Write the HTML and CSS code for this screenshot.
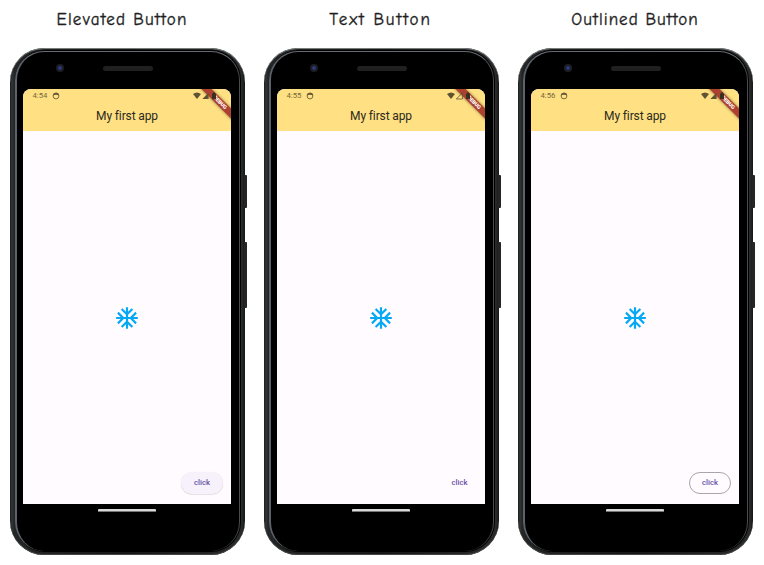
FILE: index.html
```html
<!DOCTYPE html>
<html lang="en">
<head>
<meta charset="utf-8">
<title>Flutter buttons</title>
<link rel="stylesheet" href="styles.css">
</head>
<body>
<main class="gallery" id="gallery"></main>
<template id="device">
  <section class="demo">
    <h2 class="title"></h2>
    <div class="phone">
      <i class="key power"></i><i class="key volume"></i>
      <div class="rim"><div class="glass">
        <div class="top"><i class="camera"></i><i class="speaker"></i></div>
        <div class="screen">
          <header class="appbar">
            <div class="status">
              <span class="time"></span>
              <svg class="face" width="8" height="8" viewBox="0 0 8 8"><circle cx="4" cy="4" r="2.9" fill="none" stroke="#7a6c43" stroke-width="1"/><path d="M.8 3.4Q1 1 4 .7T7.2 3.4Q4 2.2.8 3.4" fill="#665a38"/></svg>
              <svg class="signals" width="27" height="8" viewBox="0 0 27 8"><path d="M0 2Q4 -1 8 2L4 7Z" fill="#5e5333"/><path class="cell" d="M9.3 7 15.6.7V7Z"/><path d="M19 1.5H20V.5H22V1.5H23V7H19Z" fill="#3a3020"/></svg>
            </div>
            <h1>My first app</h1>
            <div class="ribbon"><span>DEBUG</span></div>
          </header>
          <div class="body">
            <svg class="snow" viewBox="0 0 24 24"><path fill="#03a9f4" d="M22 11h-4.17l3.24-3.24-1.41-1.42L15 11h-2V9l4.66-4.66-1.42-1.41L13 6.17V2h-2v4.17L7.76 2.93 6.34 4.34 11 9v2H9L4.34 6.34 2.93 7.76 6.17 11H2v2h4.17l-3.24 3.24 1.41 1.42L9 13h2v2l-4.66 4.66 1.42 1.41L11 17.83V22h2v-4.17l3.24 3.24 1.42-1.41L13 15v-2h2l4.66 4.66 1.41-1.42L17.83 13H22z"/></svg>
            <button class="btn">click</button>
          </div>
        </div>
        <div class="nav"><i></i></div>
      </div></div>
    </div>
  </section>
</template>
<script src="app.js"></script>
</body>
</html>
```
FILE: styles.css
```css
* { box-sizing: border-box; }
body { margin: 0; background: #fff; width: 764px; height: 565px; overflow: hidden; font-family: Roboto, sans-serif; }
.gallery { display: flex; gap: 19px; padding-left: 10px; }
.demo { width: 235px; }
.title { margin: 0; height: 48px; padding: 10px 11px 0 0; font: 400 17px/19px Excalifont, "Comic Neue", Lato, sans-serif; letter-spacing: 1.25px; text-align: center; color: #1e1e1e; white-space: nowrap; -webkit-text-stroke: .35px #1e1e1e; }
.text .title { letter-spacing: 1.9px; padding-right: 2px; }
.outlined .title { letter-spacing: 1.05px; padding-right: 1px; }
.phone { position: relative; height: 507px; padding: 2px 4px 3px 5px; border-radius: 34px; background: linear-gradient(90deg, #1b1d1d, #333636 2px, #242626 4px, #151616 50%, #292b2b 232px, #151616); box-shadow: inset 0 1px 0 #777b7b, inset 0 -1px 0 #444; }
.key { position: absolute; left: 234px; width: 3px; background: #252525; border-radius: 0 1px 1px 0; }
.power { top: 127px; height: 33px; }
.volume { top: 194px; height: 66px; }
.rim { height: 502px; border-radius: 30px; background: #000; padding: 1px 1px 0 0; }
.glass { height: 500px; border-radius: 29px; background: #000; border: solid; border-width: 1px 1px 0 2px; border-color: #666a73 #4a4b4d #000 #5d616b; padding: 0 6px; }
.top { height: 37px; position: relative; }
.camera { position: absolute; left: 33px; top: 12px; width: 8px; height: 8px; border-radius: 50%; background: radial-gradient(circle, #2b3d80 0 1.2px, #1c1d25 2.4px 4px); }
.speaker { position: absolute; left: 80px; top: 14px; width: 50px; height: 5px; border-radius: 3px; background: #202020; }
.screen { width: 208px; height: 415px; background: #fffbff; border-radius: 8px 8px 0 0; overflow: hidden; }
.appbar { height: 42px; background: #ffe082; position: relative; overflow: hidden; }
.status { display: flex; height: 14px; align-items: center; padding-left: 9.5px; }
.time { width: 19.5px; font-size: 7.7px; line-height: 14px; color: #75683f; }
.signals { margin-left: 133px; position: relative; z-index: 1; }
.cell { fill: #5e5333; }
.text .cell { fill: none; stroke: #5e5333; stroke-width: .8; }
h1 { margin: 5px 0 0; font-size: 12px; letter-spacing: -.13px; line-height: 16px; font-weight: 400; text-align: center; color: #2b291f; }
.ribbon { position: absolute; left: 169px; top: 8.5px; width: 54px; height: 7px; transform: rotate(45deg); background: #ae4030; box-shadow: 0 0 3px #0008; text-align: center; color: #fff; font-size: 5.2px; line-height: 7px; font-weight: 900; }
.ribbon span { display: block; padding-left: 3px; }
.body { height: 373px; position: relative; display: grid; place-items: center; }
.snow { width: 26px; height: 26px; }
.btn { position: absolute; right: 8px; bottom: 10px; width: 42px; height: 22px; padding: 0; border: 0; border-radius: 11px; background: none; font: 500 7.7px/22px Roboto, sans-serif; color: #6750a4; }
.text .btn { right: 4.5px; }
.elevated .btn { background: #f6f1fa; box-shadow: 0 .5px 1px #0003; }
.outlined .btn { border: 1px solid #aaa5ad; line-height: 20px; }
.nav { height: 14px; padding: 5px 0 0 75px; }
.nav i { display: block; width: 58px; height: 3px; border-radius: 1px; background: #d8d8d8; border: solid #777; border-width: 0 0 1px; }
```
FILE: app.js
```js
const demos = [
  ["elevated", "Elevated Button", "4:54"],
  ["text", "Text Button", "4:55"],
  ["outlined", "Outlined Button", "4:56"],
];
for (const [kind, title, time] of demos) {
  const node = document.getElementById("device").content.cloneNode(true);
  node.querySelector(".demo").classList.add(kind);
  node.querySelector(".title").textContent = title;
  node.querySelector(".time").textContent = time;
  document.getElementById("gallery").append(node);
}
```
